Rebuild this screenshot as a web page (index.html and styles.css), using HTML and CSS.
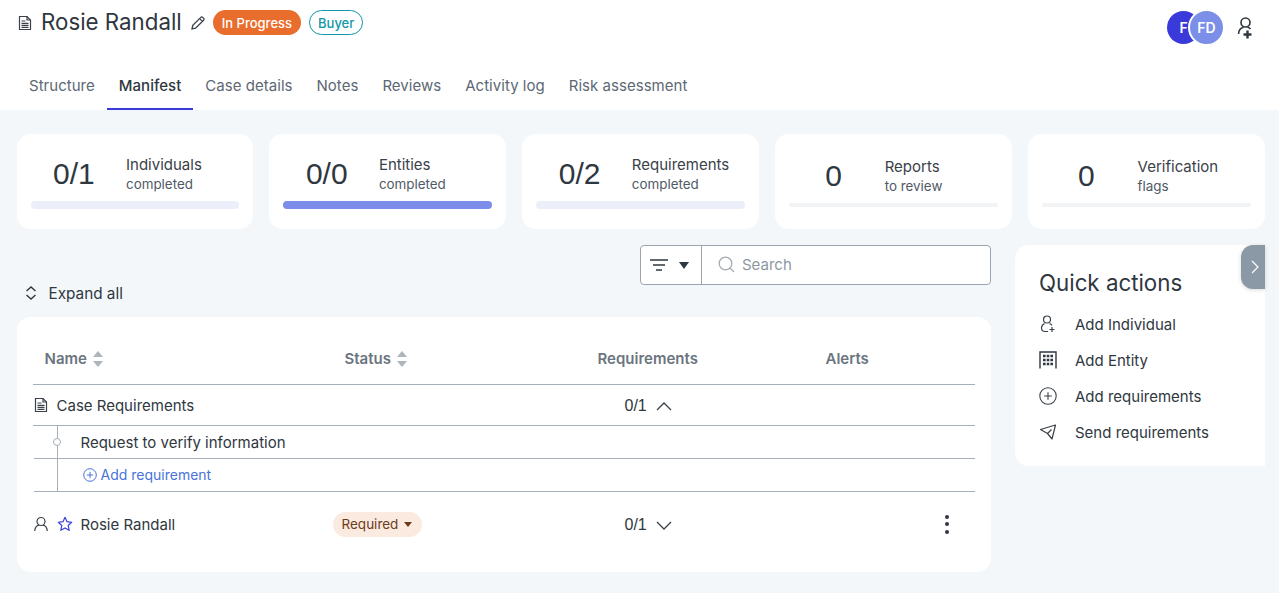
FILE: index.html
```html
<!DOCTYPE html>
<html lang="en">

<head>
  <meta charset="UTF-8">
  <title>Rosie Randall - Manifest</title>
  <link rel="stylesheet" href="styles.css">
</head>

<body>
  <header class="page-header">
    <div class="title-row">
      <div class="title-left">
        <svg class="doc-icon" width="16" height="16" viewBox="0 0 16 16" fill="none" stroke="#3a4149" stroke-width="1.2">
          <path d="M2.5 1.5h7.5l3.5 3.5v9.5h-11z" />
          <path d="M10 1.5v3.5h3.5M4.5 6h4M4.5 8.3h7M4.5 10.3h7M4.5 12.3h7" />
        </svg>
        <h1>Rosie Randall</h1>
        <svg class="edit-icon" width="16" height="16" viewBox="0 0 16 16" fill="none" stroke="#3a4149" stroke-width="1.3">
          <path d="M2 14l.8-3.6 8-8a1.3 1.3 0 0 1 1.9 0l.9.9a1.3 1.3 0 0 1 0 1.9l-8 8zM9.6 3.6l2.8 2.8" />
        </svg>
        <span class="badge badge-progress">In Progress</span>
        <span class="badge badge-buyer">Buyer</span>
      </div>
      <div class="title-right">
        <div class="avatars">
          <span class="avatar avatar-f">F</span>
          <span class="avatar avatar-fd">FD</span>
        </div>
        <svg class="assign-icon" width="18" height="24" viewBox="0 0 18 24" fill="none" stroke="#2f3740" stroke-width="1.6">
          <circle cx="8.5" cy="6.5" r="4.5" />
          <path d="M1.5 18c.2-3.6 2.4-6 5-6.7M10.5 11.3c1.2.3 2.3.9 3.1 1.7" />
          <path d="M10.500 14.500v8M6.500 18.500h8" stroke-width="2.4" />
        </svg>
      </div>
    </div>
    <nav class="tabs">
      <a class="tab">Structure</a>
      <a class="tab active">Manifest</a>
      <a class="tab">Case details</a>
      <a class="tab">Notes</a>
      <a class="tab">Reviews</a>
      <a class="tab">Activity log</a>
      <a class="tab">Risk assessment</a>
    </nav>
  </header>

  <main class="content">
    <section class="stats">
      <div class="stat-card">
        <div class="stat-top">
          <span class="stat-num">0/1</span>
          <div class="stat-text"><span class="stat-name">Individuals</span><span class="stat-sub">completed</span></div>
        </div>
        <div class="stat-bar"></div>
      </div>
      <div class="stat-card">
        <div class="stat-top">
          <span class="stat-num">0/0</span>
          <div class="stat-text"><span class="stat-name">Entities</span><span class="stat-sub">completed</span></div>
        </div>
        <div class="stat-bar full"></div>
      </div>
      <div class="stat-card">
        <div class="stat-top">
          <span class="stat-num">0/2</span>
          <div class="stat-text"><span class="stat-name">Requirements</span><span class="stat-sub">completed</span></div>
        </div>
        <div class="stat-bar"></div>
      </div>
      <div class="stat-card plain">
        <div class="stat-top">
          <span class="stat-num">0</span>
          <div class="stat-text"><span class="stat-name">Reports</span><span class="stat-sub">to review</span></div>
        </div>
        <div class="stat-bar grey"></div>
      </div>
      <div class="stat-card plain">
        <div class="stat-top">
          <span class="stat-num">0</span>
          <div class="stat-text"><span class="stat-name">Verification</span><span class="stat-sub">flags</span></div>
        </div>
        <div class="stat-bar grey"></div>
      </div>
    </section>

    <section class="columns">
      <div class="left-col">
        <div class="toolbar">
          <div class="search-box">
            <div class="filter-btn">
              <svg width="18" height="12" viewBox="0 0 18 12" fill="none" stroke="#2f3740" stroke-width="1.5">
                <path d="M0 1h18M3 6h12M6 11h6" />
              </svg>
              <span class="caret"></span>
            </div>
            <div class="search-field">
              <svg width="17" height="17" viewBox="0 0 17 17" fill="none" stroke="#a3adb6" stroke-width="1.3">
                <circle cx="7.5" cy="7.5" r="6.3" />
                <path d="M12 12l4 4" />
              </svg>
              <span>Search</span>
            </div>
          </div>
        </div>

        <div class="expand-all">
          <svg width="12" height="14" viewBox="0 0 12 14" fill="none" stroke="#2f3740" stroke-width="1.4">
            <path d="M1.5 5L6 1l4.5 4M1.5 9L6 13l4.5-4" />
          </svg>
          <span>Expand all</span>
        </div>

        <div class="table-card">
          <div class="row head-row">
            <span class="th">Name <i class="sort"></i></span>
            <span class="th">Status <i class="sort"></i></span>
            <span class="th">Requirements</span>
            <span class="th">Alerts</span>
          </div>
          <div class="row case-row">
            <span class="cell-name">
              <svg width="16" height="16" viewBox="0 0 16 16" fill="none" stroke="#3a4149" stroke-width="1.2">
                <path d="M2.5 1.5h7.5l3.5 3.5v9.5h-11z" />
                <path d="M10 1.5v3.5h3.5M4.5 6h4M4.5 8.3h7M4.5 10.3h7M4.5 12.3h7" />
              </svg>
              Case Requirements
            </span>
            <span></span>
            <span class="count">0/1
              <svg width="16" height="9" viewBox="0 0 16 9" fill="none" stroke="#3a4149" stroke-width="1.3"><path d="M1 8l7-7 7 7" /></svg>
            </span>
            <span></span>
          </div>
          <div class="sub-row request-row">
            <span class="tree-dot"></span>
            <span>Request to verify information</span>
          </div>
          <div class="sub-row add-row">
            <a class="add-link">
              <svg width="14" height="14" viewBox="0 0 14 14" fill="none" stroke="#4a72d8" stroke-width="1">
                <circle cx="7" cy="7" r="6.3" />
                <path d="M7 3.8v6.4M3.8 7h6.4" />
              </svg>
              Add requirement
            </a>
          </div>
          <div class="row person-row">
            <span class="cell-name person">
              <svg width="16" height="16" viewBox="0 0 16 16" fill="none" stroke="#3a4149" stroke-width="1.2">
                <circle cx="8" cy="5.5" r="4" />
                <path d="M1.7 15c.3-3.3 2.500-5.500 4.300-5.800M14.300 15c-.3-3.300-2.500-5.500-4.300-5.800" />
              </svg>
              <svg class="star" width="16" height="16" viewBox="0 0 16 16" fill="none" stroke="#3b3fd8" stroke-width="1.2" stroke-linejoin="round">
                <path d="M8 1.3l2 4.400 4.700.6-3.500 3.200 1 4.800L8 11.900l-4.200 2.400 1-4.800L1.300 6.300 6 5.700z" />
              </svg>
              Rosie Randall
            </span>
            <span class="status-cell"><span class="pill-required">Required <i class="pill-caret"></i></span></span>
            <span class="count">0/1
              <svg width="16" height="9" viewBox="0 0 16 9" fill="none" stroke="#3a4149" stroke-width="1.3"><path d="M1 1l7 7 7-7" /></svg>
            </span>
            <span class="kebab"><i></i><i></i><i></i></span>
          </div>
        </div>
      </div>

      <aside class="quick-actions">
        <button class="collapse-btn">
          <svg width="8" height="14" viewBox="0 0 8 14" fill="none" stroke="#fff" stroke-width="1.2"><path d="M1 1l6 6-6 6" /></svg>
        </button>
        <h2>Quick actions</h2>
        <ul>
          <li>
            <svg width="18" height="18" viewBox="0 0 18 18" fill="none" stroke="#3a4149" stroke-width="1.2">
              <circle cx="8" cy="4.500" r="3.500" />
              <path d="M5.500 8.500C3.500 9.500 2.500 11 2.500 13c0 2 1.500 3.500 3.500 3.500h3M10.500 8.500c1 .4 1.800 1 2.400 1.800" />
              <path d="M13 12v5M10.500 14.500h5" />
            </svg>
            Add Individual
          </li>
          <li>
            <svg width="18" height="18" viewBox="0 0 18 18" fill="none" stroke="#2f3740" stroke-width="1.4">
              <path d="M1 17.500V1h16v16.500" />
              <path d="M4 5h2.600M7.700 5h2.600M11.400 5h2.600M4 9h2.600M7.700 9h2.600M11.400 9h2.600M4 13h2.600M7.700 13h2.600M11.400 13h2.600" stroke-width="2.6" />
            </svg>
            Add Entity
          </li>
          <li>
            <svg width="18" height="18" viewBox="0 0 18 18" fill="none" stroke="#3a4149" stroke-width="1.1">
              <circle cx="9" cy="9" r="8.2" />
              <path d="M9 5.200v7.600M5.200 9h7.600" />
            </svg>
            Add requirements
          </li>
          <li>
            <svg width="18" height="18" viewBox="0 0 18 18" fill="none" stroke="#3a4149" stroke-width="1.2" stroke-linejoin="round">
              <path d="M1.500 6.500L16.500 2l-3.500 14-4.500-5.500zM8.500 10.500L12.500 6.500" />
            </svg>
            Send requirements
          </li>
        </ul>
      </aside>
    </section>
  </main>
</body>

</html>
```

FILE: styles.css
```css
* {
  box-sizing: border-box;
}

html,
body {
  height: 100%;
}

body {
  margin: 0;
  font-family: 'Inter', 'Noto Sans', sans-serif;
  background-color: #f4f7fa;
  color: #2f3740;
  overflow: hidden;
  display: flex;
  flex-direction: column;
}

svg {
  flex-shrink: 0;
  display: block;
}

.page-header {
  background: #fff;
  height: 110px;
  padding: 0 17px;
}

.title-row {
  height: 61px;
  display: flex;
  justify-content: space-between;
  align-items: flex-start;
}

.title-left {
  display: flex;
  align-items: center;
  height: 45px;
}

.page-header h1 {
  margin: -2px 8px 0 8px;
  font-size: 22.3px;
  font-weight: 400;
  color: #2f3740;
}

.badge {
  font-size: 13px;
  font-weight: 500;
  height: 25px;
  display: flex;
  align-items: center;
  padding: 0 9px;
  border-radius: 13px;
}

.badge-progress {
  background: #e96d2d;
  color: #fff;
  margin-left: 7px;
}

.badge-buyer {
  border: 1px solid #0f97a8;
  color: #0f97a8;
  margin-left: 8px;
  padding: 0 8px;
}

.title-right {
  display: flex;
  align-items: center;
  margin-top: 11px;
  padding-right: 7px;
}

.avatars {
  display: flex;
}

.avatar {
  width: 33px;
  height: 33px;
  border-radius: 50%;
  color: #fff;
  font-size: 14px;
  font-weight: 600;
  display: flex;
  align-items: center;
  justify-content: center;
}

.avatar-f {
  background: #3a3adb;
}

.avatar-fd {
  background: #7b8fe8;
  border: 2px solid #fff;
  width: 37px;
  height: 37px;
  margin: -2px 0 -2px -12px;
}

.assign-icon {
  margin-left: 12px;
}

.tabs {
  display: flex;
  height: 49px;
}

.tab {
  display: flex;
  align-items: center;
  height: 49px;
  padding: 2px 12px 0;
  font-size: 15px;
  letter-spacing: 0.03px;
  color: #5d6873;
  border-bottom: 2px solid transparent;
}

.tab.active {
  color: #2f3740;
  font-weight: 500;
  border-bottom-color: #3a3adb;
}

.content {
  flex: 1;
  padding: 24px 14px 0 16.5px;
}

.stats {
  display: grid;
  grid-template-columns: repeat(5, 1fr);
  gap: 16px;
}

.stat-card {
  background: #fff;
  border-radius: 14px;
  height: 95px;
  padding: 0 14px;
}

.stat-top {
  height: 67px;
  display: flex;
  align-items: center;
  padding-top: 14px;
}

.stat-num {
  width: 95.5px;
  margin-top: -2px;
  padding-left: 22.5px;
  font-family: 'Liberation Sans', sans-serif;
  font-size: 30px;
  color: #2f3740;
}

.stat-text {
  display: flex;
  flex-direction: column;
}

.stat-name {
  font-size: 15px;
  color: #3a4149;
  line-height: 20px;
}

.stat-sub {
  font-size: 13.4px;
  color: #4f5a65;
  line-height: 19px;
}

.stat-bar {
  height: 8px;
  border-radius: 4px;
  background: #eceef9;
}

.stat-bar.full {
  background: #7b8de8;
}

.plain .stat-top {
  padding-top: 18px;
}

.plain .stat-num {
  padding-left: 36px;
}

.plain .stat-bar.grey {
  height: 4px;
  margin-top: 2px;
  background: #f1f3f5;
}

.columns {
  display: flex;
  gap: 24px;
  margin-top: 16px;
}

.left-col {
  flex: 1;
}

.toolbar {
  display: flex;
  justify-content: flex-end;
}

.search-box {
  width: 351px;
  height: 40px;
  background: #fff;
  border: 1px solid #9aa5b0;
  border-radius: 4px;
  display: flex;
}

.filter-btn {
  width: 61px;
  display: flex;
  align-items: center;
  gap: 11px;
  padding-left: 9px;
  border-right: 1px solid #9aa5b0;
}

.caret {
  border-left: 5px solid transparent;
  border-right: 5px solid transparent;
  border-top: 7px solid #2f3740;
}

.search-field {
  display: flex;
  align-items: center;
  gap: 7px;
  padding: 0 0 1px 16px;
  font-size: 15px;
  color: #8c97a1;
}

.expand-all {
  display: flex;
  align-items: center;
  gap: 12px;
  height: 18px;
  margin: -1px 0 0 8px;
  font-size: 15.3px;
  color: #2f3740;
}

.table-card {
  background: #fff;
  border-radius: 14px;
  margin-top: 15px;
  height: 255px;
  padding: 0 16px;
}

.row {
  display: grid;
  grid-template-columns: 300px 253px 228px 1fr;
  align-items: center;
  border-bottom: 1px solid #a6afb9;
  padding-left: 12px;
}

.head-row {
  height: 68px;
  padding-top: 16px;
}

.th {
  font-size: 15px;
  font-weight: 600;
  color: #6b7580;
  display: flex;
  align-items: center;
  gap: 6px;
}

.sort {
  display: block;
  width: 10px;
  height: 16px;
  position: relative;
}

.sort::before,
.sort::after {
  content: "";
  position: absolute;
  left: 0;
  border-left: 5px solid transparent;
  border-right: 5px solid transparent;
}

.sort::before {
  top: 0;
  border-bottom: 6.5px solid #adb5bd;
}

.sort::after {
  bottom: 0;
  border-top: 6.5px solid #adb5bd;
}

.case-row {
  height: 41px;
  padding-left: 0;
  grid-template-columns: 312px 253px 228px 1fr;
}

.cell-name {
  display: flex;
  align-items: center;
  gap: 8px;
  color: #2f3740;
  font-size: 15px;
}

.count {
  display: flex;
  align-items: center;
  gap: 9px;
  margin: 2px 0 0 27px;
  font-family: 'Liberation Sans', sans-serif;
  font-size: 16px;
  color: #2f3740;
}

.sub-row {
  display: flex;
  align-items: center;
  height: 33px;
  margin-left: 24px;
  border-left: 1px solid #a6afb9;
  position: relative;
  padding-left: 23px;
  font-size: 15px;
  color: #2f3740;
}

.sub-row::after {
  content: "";
  position: absolute;
  left: -24px;
  right: 0;
  bottom: 0;
  border-bottom: 1px solid #a6afb9;
}

.tree-dot {
  position: absolute;
  left: -5px;
  top: 12px;
  width: 8px;
  height: 8px;
  border-radius: 50%;
  background: #fff;
  border: 1px solid #a6afb9;
}

.add-link {
  display: flex;
  align-items: center;
  gap: 4px;
  margin: 0 0 2px 2px;
  font-size: 14px;
  color: #4a72d8;
}

.person-row {
  height: 64px;
  padding-left: 0;
  border-bottom: none;
  grid-template-columns: 300px 265px 228px 1fr;
}

.person {
  white-space: nowrap;
}

.status-cell {
  display: flex;
}

.pill-required {
  display: flex;
  align-items: center;
  gap: 6px;
  height: 25px;
  padding: 0 10px 0 9px;
  border-radius: 13px;
  background: #fbeae0;
  color: #6d3c1c;
  font-size: 13.5px;
}

.pill-caret {
  border-left: 4px solid transparent;
  border-right: 4px solid transparent;
  border-top: 5px solid #6d3c1c;
}

.kebab {
  display: flex;
  flex-direction: column;
  gap: 3.5px;
  align-items: flex-end;
  padding-right: 26px;
}

.kebab i {
  width: 4px;
  height: 4px;
  border-radius: 50%;
  background: #2f3740;
}

.quick-actions {
  width: 250px;
  height: 221px;
  background: #fff;
  border-radius: 14px 0 0 14px;
  padding: 24px 24px 0;
  position: relative;
}

.collapse-btn {
  position: absolute;
  top: 0;
  right: 0;
  width: 24px;
  height: 44px;
  background: #8b98a5;
  border: none;
  border-radius: 12px 0 0 12px;
  padding: 0 0 0 10px;
  box-shadow: 0 1px 4px rgba(0, 0, 0, 0.15);
}

.quick-actions h2 {
  margin: 0;
  font-size: 22.3px;
  font-weight: 400;
  line-height: 28px;
  color: #2f3740;
}

.quick-actions ul {
  list-style: none;
  margin: 9px 0 0;
  padding: 0;
}

.quick-actions li {
  display: flex;
  align-items: center;
  gap: 18px;
  height: 36px;
  font-size: 15px;
  color: #2f3740;
}
```
